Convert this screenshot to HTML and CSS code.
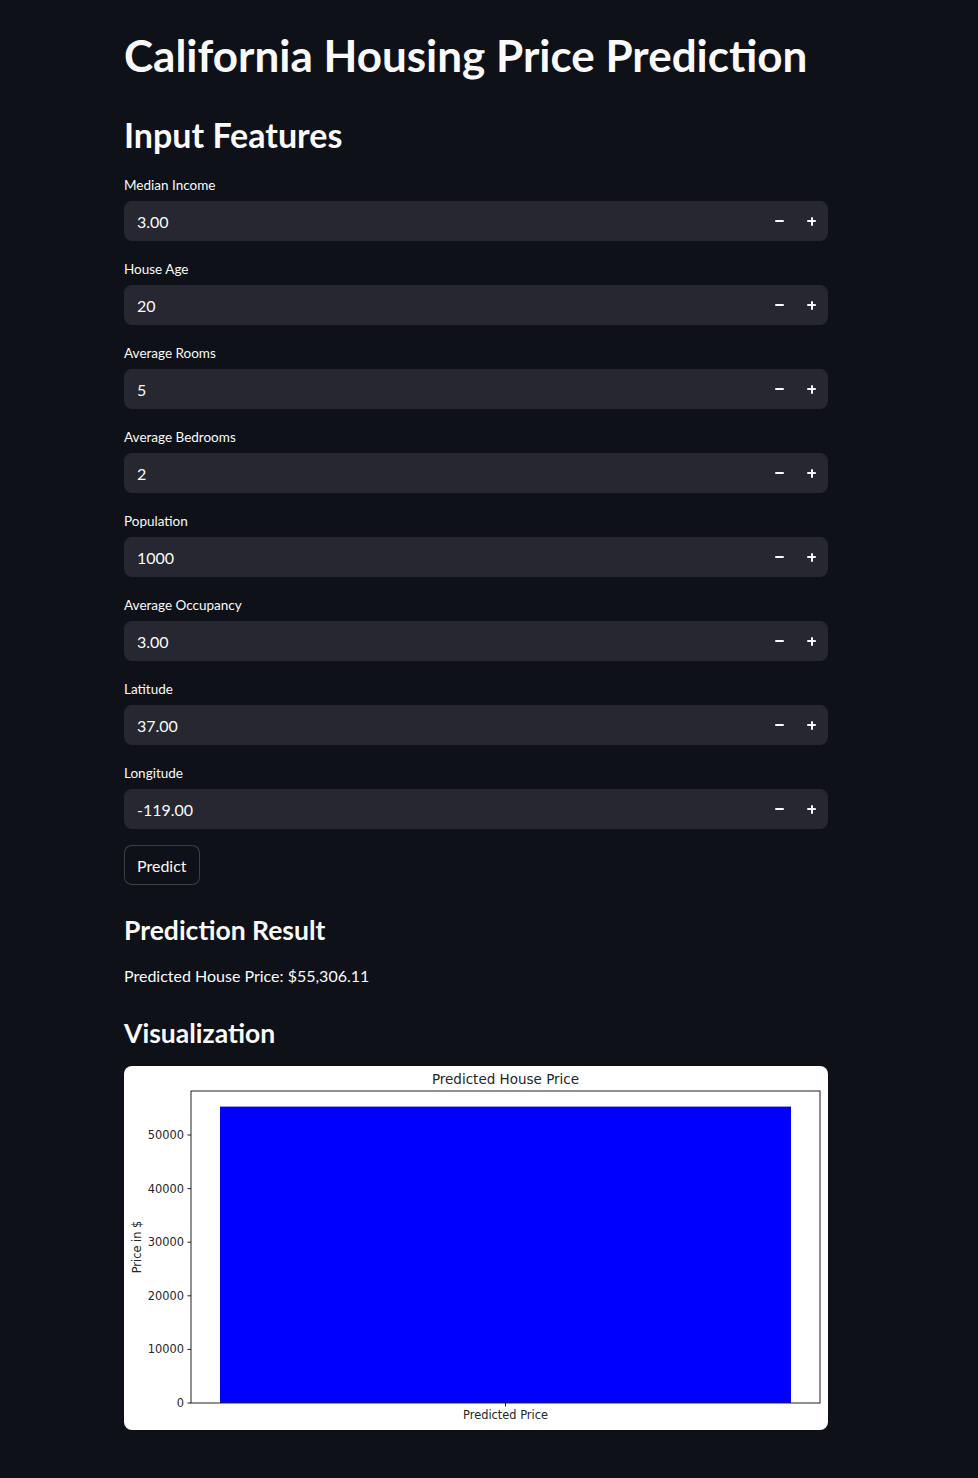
FILE: index.html
```html
<!DOCTYPE html>
<html lang="en">
<head>
<meta charset="utf-8">
<title>California Housing Price Prediction</title>
<link rel="stylesheet" href="styles.css">
</head>
<body>
<main class="app">
  <h1 class="title">California Housing Price Prediction</h1>
  <h2 class="section">Input Features</h2>

  <div class="fields">
    <div class="field">
      <label class="label">Median Income</label>
      <div class="numinput"><span class="value">3.00</span><span class="step minus"></span><span class="step plus"></span></div>
    </div>
    <div class="field">
      <label class="label">House Age</label>
      <div class="numinput"><span class="value">20</span><span class="step minus"></span><span class="step plus"></span></div>
    </div>
    <div class="field">
      <label class="label">Average Rooms</label>
      <div class="numinput"><span class="value">5</span><span class="step minus"></span><span class="step plus"></span></div>
    </div>
    <div class="field">
      <label class="label">Average Bedrooms</label>
      <div class="numinput"><span class="value">2</span><span class="step minus"></span><span class="step plus"></span></div>
    </div>
    <div class="field">
      <label class="label">Population</label>
      <div class="numinput"><span class="value">1000</span><span class="step minus"></span><span class="step plus"></span></div>
    </div>
    <div class="field">
      <label class="label">Average Occupancy</label>
      <div class="numinput"><span class="value">3.00</span><span class="step minus"></span><span class="step plus"></span></div>
    </div>
    <div class="field">
      <label class="label">Latitude</label>
      <div class="numinput"><span class="value">37.00</span><span class="step minus"></span><span class="step plus"></span></div>
    </div>
    <div class="field">
      <label class="label">Longitude</label>
      <div class="numinput"><span class="value">-119.00</span><span class="step minus"></span><span class="step plus"></span></div>
    </div>
  </div>

  <button class="btn">Predict</button>

  <h3 class="sub result-h">Prediction Result</h3>
  <p class="result">Predicted House Price: $55,306.11</p>

  <h3 class="sub viz-h">Visualization</h3>
  <div class="chart">
    <svg viewBox="0 0 704 364" width="704" height="364" xmlns="http://www.w3.org/2000/svg">
      <rect x="96" y="40.6" width="571" height="296.4" fill="#0000ff"/>
      <rect x="67" y="25" width="629" height="312" fill="none" stroke="#222" stroke-width="1"/>
      <text class="ct" x="381.5" y="18" text-anchor="middle" font-size="13.5">Predicted House Price</text>
      <g stroke="#222" stroke-width="1">
        <line x1="63.5" y1="337" x2="67" y2="337"/>
        <line x1="63.5" y1="283.4" x2="67" y2="283.4"/>
        <line x1="63.5" y1="229.8" x2="67" y2="229.8"/>
        <line x1="63.5" y1="176.2" x2="67" y2="176.2"/>
        <line x1="63.5" y1="122.6" x2="67" y2="122.6"/>
        <line x1="63.5" y1="69" x2="67" y2="69"/>
        <line x1="381.5" y1="337" x2="381.5" y2="340.5"/>
      </g>
      <g class="ct" font-size="11.4" text-anchor="end">
        <text x="60" y="341">0</text>
        <text x="60" y="287.4">10000</text>
        <text x="60" y="233.8">20000</text>
        <text x="60" y="180.2">30000</text>
        <text x="60" y="126.6">40000</text>
        <text x="60" y="73">50000</text>
      </g>
      <text class="ct" x="381.5" y="353" text-anchor="middle" font-size="11.4">Predicted Price</text>
      <text class="ct" x="0" y="0" text-anchor="middle" font-size="11.4" transform="translate(17 181) rotate(-90)">Price in $</text>
    </svg>
  </div>
</main>
</body>
</html>
```

FILE: styles.css
```css
html, body {
  margin: 0;
  padding: 0;
  background: #0e1117;
}

body {
  color: #fafafa;
  font-family: "Lato", "Noto Sans", sans-serif;
}

.app {
  width: 704px;
  margin-left: 124px;
  padding-top: 27px;
  padding-bottom: 48px;
  display: flex;
  flex-direction: column;
  align-items: flex-start;
}

.title {
  margin: 0;
  font-size: 44px;
  line-height: 56px;
  font-weight: 700;
}

.section {
  margin: 32px 0 0;
  font-size: 34px;
  line-height: 40px;
  font-weight: 700;
}

.fields {
  margin-top: 20px;
  width: 100%;
  display: flex;
  flex-direction: column;
  gap: 18px;
}

.field {
  display: flex;
  flex-direction: column;
}

.label {
  font-size: 13.5px;
  line-height: 20px;
  margin-bottom: 6px;
}

.numinput {
  height: 40px;
  background: #262730;
  border-radius: 8px;
  display: flex;
  align-items: center;
  padding-left: 13px;
}

.value {
  flex: 1;
  font-size: 16px;
}

.step {
  width: 32px;
  height: 40px;
  position: relative;
}

.step::before,
.plus::after {
  content: "";
  position: absolute;
  left: 11px;
  top: 19px;
  width: 9px;
  height: 2px;
  background: #fafafa;
  border-radius: 1px;
}

.plus::after {
  left: 14.5px;
  top: 15.5px;
  width: 2px;
  height: 9px;
}

.btn {
  margin-top: 16px;
  height: 40px;
  padding: 0 12px;
  background: #0e1117;
  color: #fafafa;
  border: 1px solid rgba(250, 250, 250, 0.2);
  border-radius: 8px;
  font-family: inherit;
  font-size: 16px;
}

.sub {
  margin: 0;
  font-size: 26.5px;
  line-height: 36px;
  font-weight: 700;
}

.result-h {
  margin-top: 27px;
}

.result {
  margin: 16px 0 0;
  font-size: 16px;
  line-height: 24px;
}

.viz-h {
  margin-top: 27px;
}

.chart {
  margin-top: 15px;
  width: 704px;
  height: 364px;
  background: #ffffff;
  border-radius: 8px;
  overflow: hidden;
}

.chart svg {
  display: block;
}

.ct {
  font-family: "DejaVu Sans", sans-serif;
  fill: #262626;
}
```
